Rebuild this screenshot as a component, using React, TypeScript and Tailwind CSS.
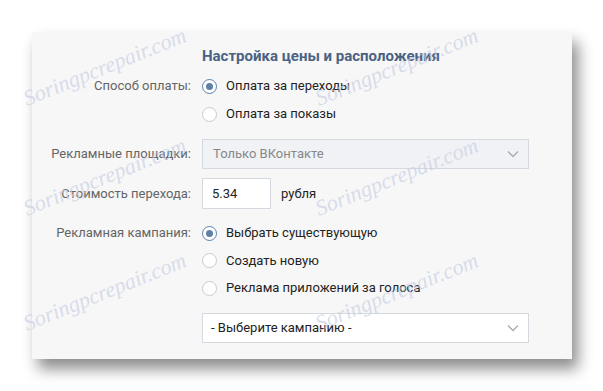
import React from 'react';

const font = { fontFamily: 'Roboto, "Noto Sans", sans-serif' };

const Radio = ({ checked, label }: { checked?: boolean; label: string }) => (
  <div className="flex items-center h-full">
    <span
      className={
        'w-[15px] h-[15px] rounded-full border flex items-center justify-center bg-white ' +
        (checked ? 'border-[#5e81a8]' : 'border-[#c5ccd3]')
      }
    >
      {checked && <span className="w-[7px] h-[7px] rounded-full bg-[#5e81a8]" />}
    </span>
    <span className="ml-[9px] text-[13px] text-[#222]">{label}</span>
  </div>
);

const Chevron = () => (
  <svg width="12" height="8" viewBox="0 0 12 8" className="absolute right-[9px] top-1/2 -translate-y-1/2">
    <path d="M1 1.5 L6 6.5 L11 1.5" fill="none" stroke="#a3adb8" strokeWidth="1.3" />
  </svg>
);

const Row = ({ label, h, mt, children }: { label?: string; h: string; mt: string; children: React.ReactNode }) => (
  <div className={'flex items-center ' + h + ' ' + mt}>
    <div className="w-[159px] pr-0 text-right text-[13px] text-[#656565] shrink-0">{label}</div>
    <div className="ml-[11px] flex-1 h-full flex items-center">{children}</div>
  </div>
);

const Watermark = ({ className }: { className: string }) => (
  <div
    className={'absolute pointer-events-none italic text-[22px] text-[#c9cfe4]/70 -rotate-[22deg] select-none ' + className}
    style={{ fontFamily: '"Liberation Serif", serif' }}
  >
    Soringpcrepair.com
  </div>
);

export default function App() {
  return (
    <div className="w-[603px] h-[391px] bg-white relative overflow-hidden" style={font}>
      <div className="absolute left-[32px] top-[32px] w-[540px] h-[327px] bg-[#f7f7f7] shadow-[6px_10px_14px_rgba(0,0,0,0.45)]" />
      <div className="relative ml-[32px] pt-[32px] w-[540px]">
        <div className="pt-[14px] h-[34px] pl-[170px] text-[15px] font-bold text-[#4a6283] leading-[20px]">
          Настройка цены и расположения
        </div>
        <Row label="Способ оплаты:" h="h-[28px]" mt="mt-[6px]">
          <Radio checked label="Оплата за переходы" />
        </Row>
        <Row h="h-[28px]" mt="mt-0">
          <Radio label="Оплата за показы" />
        </Row>
        <Row label="Рекламные площадки:" h="h-[30px]" mt="mt-[11px]">
          <div className="relative w-[327px] h-full border border-[#d3d9de] bg-[#f0f2f5] flex items-center pl-[10px] text-[13px] text-[#888]">
            Только ВКонтакте
            <Chevron />
          </div>
        </Row>
        <Row label="Стоимость перехода:" h="h-[31px]" mt="mt-[9px]">
          <div className="w-[69px] h-full border border-[#d3d9de] bg-white flex items-center pl-[9px] text-[13px] text-[#222]">
            5.34
          </div>
          <span className="ml-[10px] text-[13px] text-[#222]">рубля</span>
        </Row>
        <Row label="Рекламная кампания:" h="h-[28px]" mt="mt-[10px]">
          <Radio checked label="Выбрать существующую" />
        </Row>
        <Row h="h-[27px]" mt="mt-0">
          <Radio label="Создать новую" />
        </Row>
        <Row h="h-[28px]" mt="mt-0">
          <Radio label="Реклама приложений за голоса" />
        </Row>
        <Row h="h-[30px]" mt="mt-[11px]">
          <div className="relative w-[327px] h-full border border-[#d3d9de] bg-white flex items-center pl-[8px] text-[13px] text-[#222]">
            - Выберите кампанию -
            <Chevron />
          </div>
        </Row>
      </div>
      <Watermark className="left-[18px] top-[50px]" />
      <Watermark className="left-[310px] top-[50px]" />
      <Watermark className="left-[18px] top-[160px]" />
      <Watermark className="left-[310px] top-[160px]" />
      <Watermark className="left-[18px] top-[275px]" />
      <Watermark className="left-[310px] top-[275px]" />
    </div>
  );
}
